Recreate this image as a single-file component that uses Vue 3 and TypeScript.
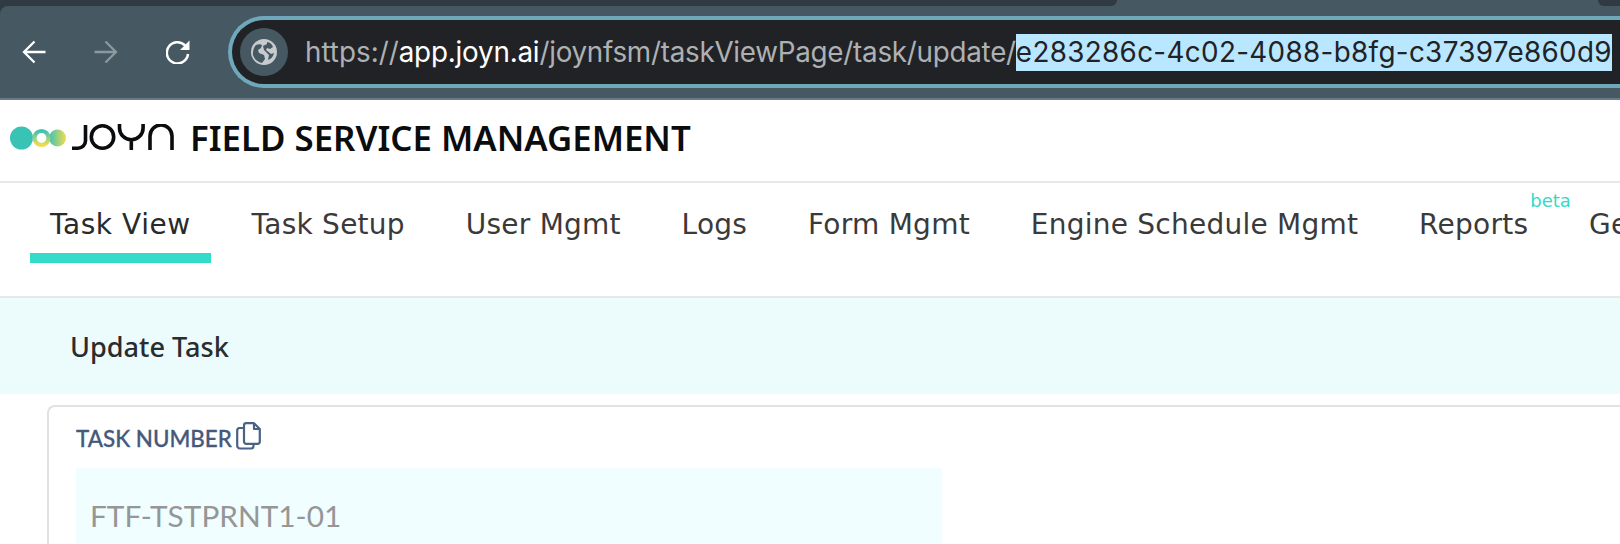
<script setup lang="ts">
const tabs: string[] = ['Task View', 'Task Setup', 'User Mgmt', 'Logs', 'Form Mgmt', 'Engine Schedule Mgmt', 'Reports', 'Ge']
</script>

<template>
  <div class="page">
    <div class="chrome">
      <div class="tabstrip">
        <div class="strip-left"></div>
        <div class="strip-active"></div>
        <div class="strip-right"></div>
      </div>
      <div class="toolbar">
        <div class="navicons">
          <svg viewBox="0 0 24 24" width="24" height="24" fill="none" stroke="#fff" stroke-width="2.3">
            <path d="M23.5 12H2M12.5 1.5 2 12l10.5 10.5" />
          </svg>
          <svg viewBox="0 0 24 24" width="24" height="24" fill="none" stroke="#8c999f" stroke-width="2.3">
            <path d="M.5 12H22M11.5 1.5 22 12 11.5 22.5" />
          </svg>
          <svg viewBox="0 0 24 24" width="24" height="24" fill="none" stroke="#fff" stroke-width="2.5">
            <path d="M22 14a10.6 10.6 0 1 1-3-8.6L22 8" />
            <path d="M23.5 .5v9.5H14Z" fill="#fff" stroke="none" />
          </svg>
        </div>
        <div class="omnibox">
          <span class="globe-wrap">
            <svg viewBox="0 0 26 26" width="26" height="26">
              <circle cx="13" cy="13" r="13" fill="#c8cbcd" />
              <path d="M5 6c2-1 5-1 6 0l-1 3-3 2 1 3 5 2 1 4-3 4c-4-1-8-4-9-8-.5-4 1-8 3-10ZM16 3c3 .5 5 2 6 5l-3 2-3-1-1 2 5 4 3-1c-1 4-3 6-6 7l1-5-5-5-1-4 4-2Z" fill="#465862" />
            </svg>
          </span>
          <span class="url">
            <span class="muted">https://</span><span class="host">app.joyn.ai</span><span class="muted path">/joynfsm/taskViewPage/task/update/</span><span class="sel">e283286c-4c02-4088-b8fg-c37397e860d9</span>
          </span>
        </div>
      </div>
    </div>

    <header class="brand">
      <svg class="logo" viewBox="0 0 56 26" width="56" height="26">
        <defs>
          <linearGradient id="ring" x1="0" y1="0" x2="0" y2="1">
            <stop offset="0" stop-color="#3cc3b6" />
            <stop offset="1" stop-color="#f2dc4e" />
          </linearGradient>
          <linearGradient id="ball" x1="0" y1="0" x2="1" y2="0">
            <stop offset="0" stop-color="#3cc3b6" />
            <stop offset="1" stop-color="#f2dc4e" />
          </linearGradient>
        </defs>
        <circle cx="47.5" cy="13" r="8.5" fill="url(#ball)" />
        <circle cx="11.5" cy="13" r="11.5" fill="#38c3b5" />
        <circle cx="31.5" cy="13" r="7" fill="#fff" stroke="url(#ring)" stroke-width="4.2" />
      </svg>
      <svg class="wordmark" viewBox="0 0 102 26" width="102" height="26" fill="none" stroke="#0b0c0e" stroke-width="3.6">
        <path d="M0 24.2h6a7.5 7.5 0 0 0 7.5-7.5V1" />
        <circle cx="30.5" cy="13" r="11.2" />
        <path d="M47.5 0v4a11.8 11.8 0 0 0 23.6 0V0M59.3 15.5V26" />
        <path d="M78 26V12a11 11 0 0 1 22 0v14" />
      </svg>
      <h1 class="title">FIELD SERVICE MANAGEMENT</h1>
    </header>

    <nav class="tabs">
      <div v-for="(t, i) in tabs" :key="t" class="tab" :class="{ active: i === 0 }">
        {{ t }}
        <sup v-if="t === 'Reports'" class="beta">beta</sup>
      </div>
    </nav>

    <div class="band"><span>Update Task</span></div>

    <section class="card">
      <div class="label">
        <span>TASK NUMBER</span>
        <svg class="copy" viewBox="0 0 25 28" width="25" height="28" fill="none" stroke="#4a6285" stroke-width="2.2" stroke-linejoin="round">
          <path d="M8 6H3.5A2.5 2.5 0 0 0 1.2 8.5v15A2.8 2.8 0 0 0 4 26.5h11a2.5 2.5 0 0 0 2.5-2.5v-2" />
          <path d="M8 3.5A2.3 2.3 0 0 1 10.3 1.2H18L23.8 7v12.5a2.3 2.3 0 0 1-2.3 2.3H10.3A2.3 2.3 0 0 1 8 19.5Z" />
          <path d="M18 1.2V7h5.8" />
        </svg>
      </div>
      <div class="field">FTF-TSTPRNT1-01</div>
    </section>
  </div>
</template>

<style>
html, body { margin: 0; background: #fff; overflow: hidden; }
</style>

<style scoped>
.page { width: 1620px; height: 544px; overflow: hidden; background: #fff; font-family: "Noto Sans", sans-serif; }
.chrome { height: 100px; background: #2f3a42; border-bottom: 2px solid #6a7a84; box-sizing: border-box; overflow: hidden; }
.tabstrip { display: flex; height: 6px; background: #465862; }
.strip-left { width: 1117px; background: #2f3a42; border-bottom-right-radius: 10px; }
.strip-active { flex: 1; }
.strip-right { width: 22px; background: #2f3a42; border-bottom-left-radius: 10px; }
.toolbar { height: 92px; background: #465862; display: flex; align-items: center; padding-left: 22px; box-sizing: border-box; border-top-left-radius: 8px; }
.navicons { display: flex; gap: 48px; flex: none; align-items: center; margin-right: 38px; }
.omnibox { height: 72px; width: 1500px; flex: none; box-sizing: border-box; border: 4px solid #6fa8bb; border-right: none; border-radius: 36px 0 0 36px; background: #212226; display: flex; align-items: center; padding-left: 8px; }
.globe-wrap { width: 48px; height: 48px; border-radius: 50%; background: #465862; display: flex; align-items: center; justify-content: center; flex: none; }
.url { margin-left: 17px; font-family: Inter, sans-serif; font-size: 27.8px; line-height: 37px; white-space: nowrap; }
.muted { color: #aeb1b3; }
.path { letter-spacing: -0.26px; }
.host { color: #fff; letter-spacing: -0.2px; }
.sel { background: #b9e7ff; color: #212226; display: inline-block; letter-spacing: 0.34px; }
.brand { display: flex; align-items: center; border-bottom: 2px solid #e8e8e8; padding: 0 0 7px 10px; box-sizing: content-box; height: 74px; }
.logo { flex: none; margin-top: 2px; }
.wordmark { flex: none; margin-left: 6px; }
.title { margin: 0 0 0 16px; font-size: 34.8px; font-weight: 600; color: #0b0c0e; white-space: nowrap; }
.tabs { height: 115px; display: flex; border-bottom: 2px solid #e8e8e8; padding-left: 30px; gap: 20.8px; box-sizing: border-box; font-family: "DejaVu Sans", sans-serif; letter-spacing: 0.25px; }
.tab { position: relative; padding: 25px 20px 0; font-size: 28px; color: #3a3a3a; white-space: nowrap; height: 80px; box-sizing: border-box; flex: none; }
.tab:last-child { padding-right: 0; }
.tab.active { border-bottom: 10px solid #33dcc9; letter-spacing: 0.55px; color: #2a2a2a; }
.beta { position: absolute; left: calc(100% - 18px); top: 6px; font-size: 18px; color: #36d9c8; line-height: 24px; letter-spacing: 0; }
.band { height: 96px; background: #ecfbfb; display: flex; align-items: center; padding-left: 70px; font-size: 27.1px; font-weight: 500; color: #2a2c2e; }
.card { margin: 11px 0 0 47px; border: 2px solid #e2e2e2; border-right: none; border-radius: 8px 0 0 0; padding: 14px 0 0 27px; height: 200px; box-sizing: border-box; }
.label { display: flex; align-items: center; gap: 4px; font-family: Lato, sans-serif; font-size: 22.4px; font-weight: 500; color: #46597a; height: 34px; -webkit-text-stroke: 0.3px #46597a; }
.copy { margin-top: -4px; }
.field { width: 866px; height: 80px; margin-top: 13px; background: #f0feff; padding: 24px 0 0 14px; box-sizing: border-box; font-family: Lato, sans-serif; font-size: 29.8px; line-height: 48px; color: #969696; }
</style>
